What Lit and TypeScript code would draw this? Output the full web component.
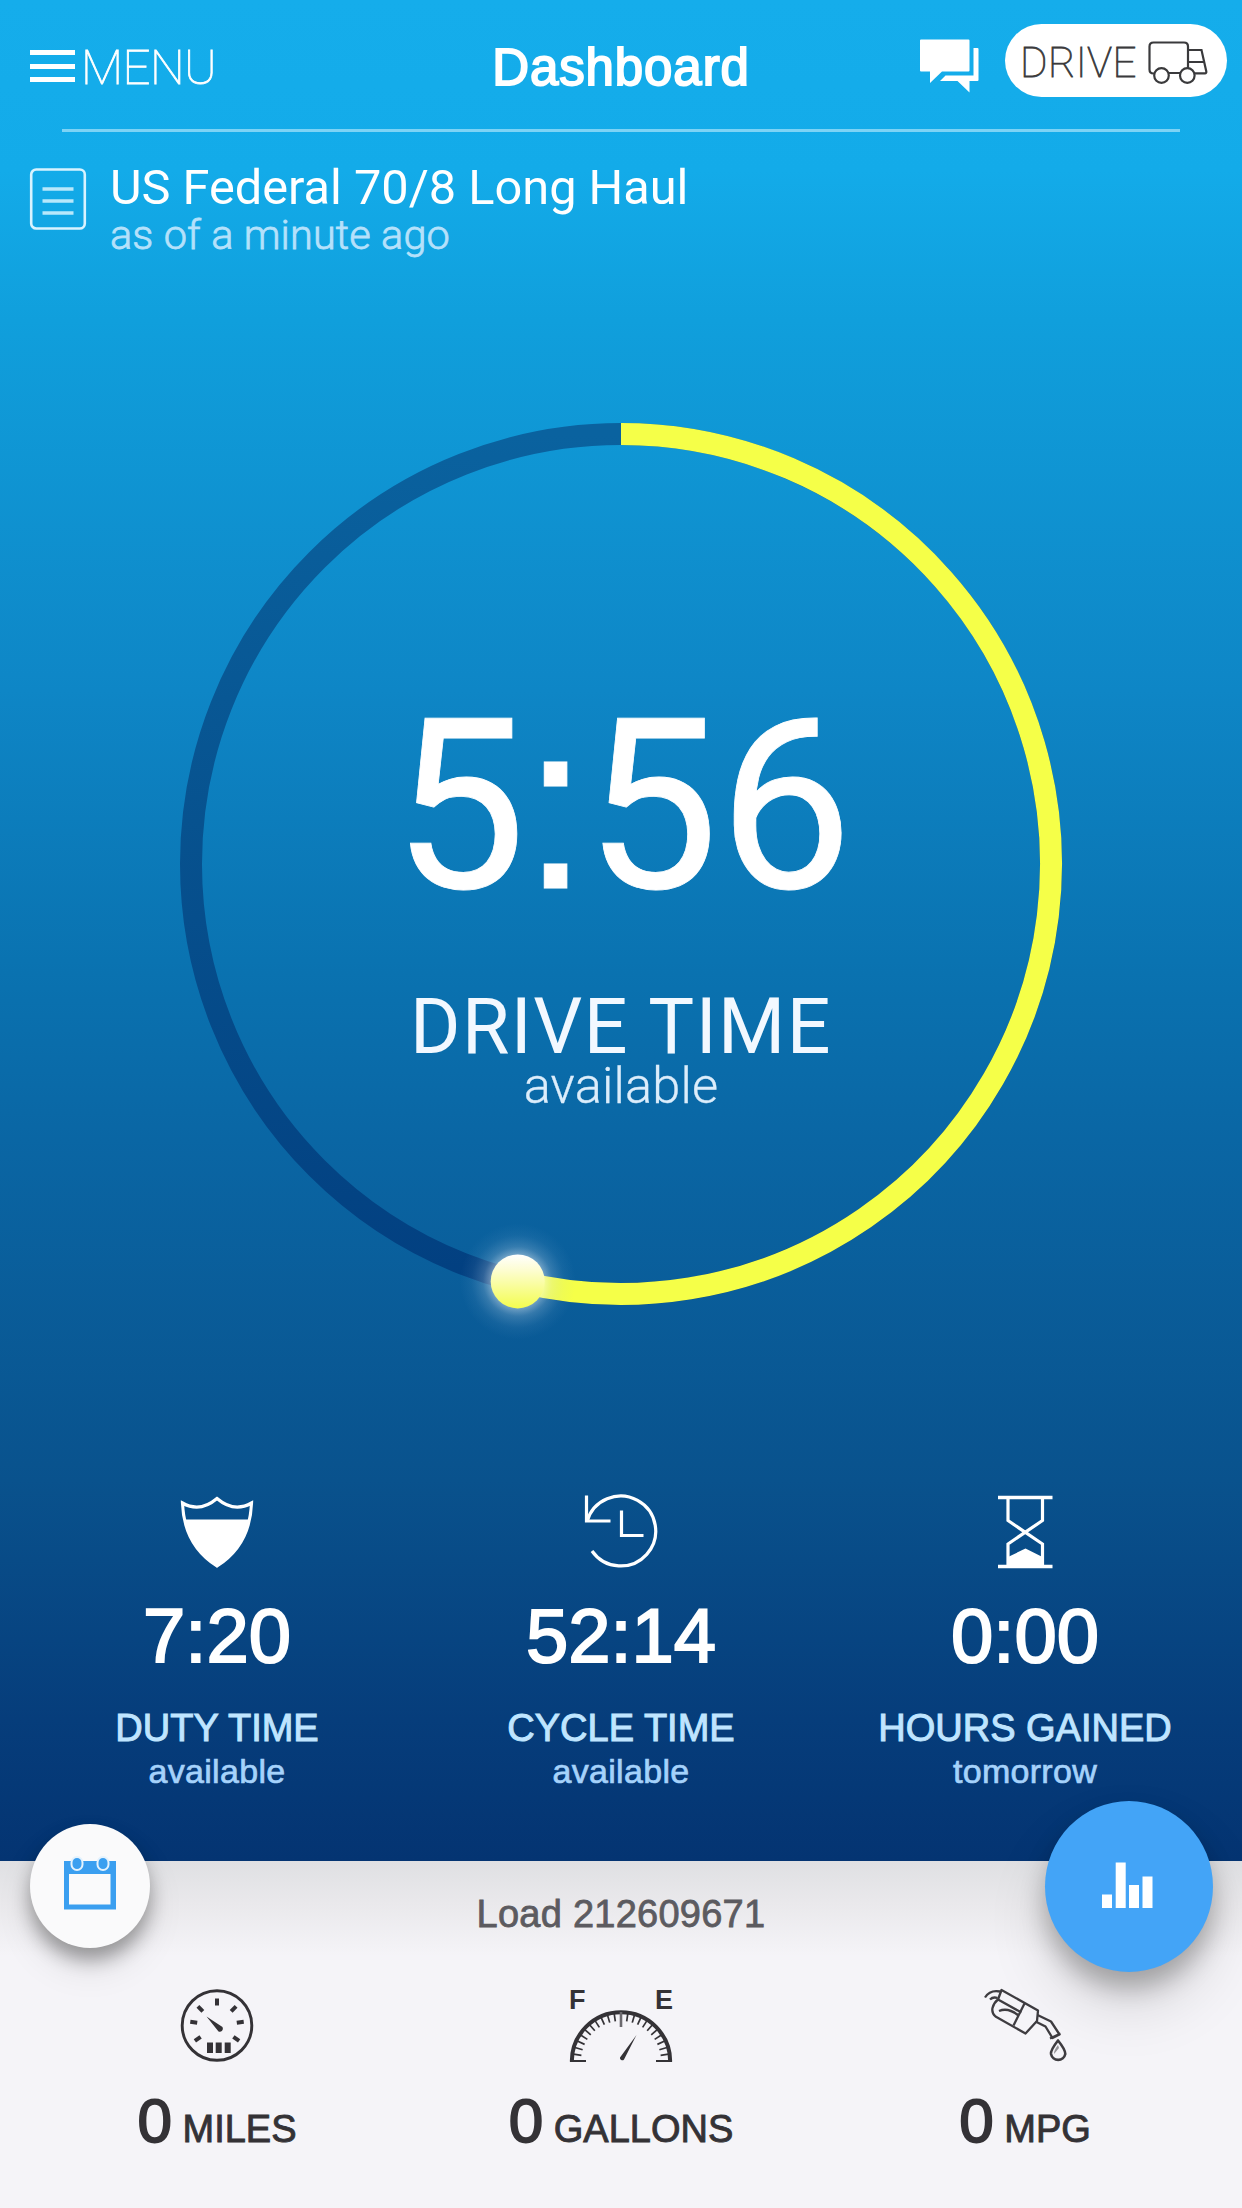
import { LitElement, html, css, svg, TemplateResult } from "lit";
import { customElement, property } from "lit/decorators.js";

const RADIUS = 430;
const CENTER = 441;

/** Point on the dial for a clockwise angle measured from twelve o'clock. */
function polar(cx: number, cy: number, r: number, deg: number): [number, number] {
  const a = (deg * Math.PI) / 180;
  return [cx + r * Math.sin(a), cy - r * Math.cos(a)];
}

@customElement("time-dial")
export class TimeDial extends LitElement {
  @property() value = "";
  @property() label = "";
  @property() caption = "";
  @property({ type: Number }) angle = 0;

  static styles = css`
    :host {
      display: grid;
      justify-items: center;
      color: #fff;
      font-family: Roboto, "Liberation Sans", sans-serif;
    }
    .ring,
    .readout {
      grid-area: 1 / 1;
    }
    .ring {
      width: 882px;
      height: 882px;
      overflow: visible;
    }
    .readout {
      display: flex;
      flex-direction: column;
      align-items: center;
      padding-top: 264px;
    }
    .value {
      height: 240px;
      padding-left: 3px;
      font-size: 238px;
      line-height: 240px;
      white-space: nowrap;
      -webkit-text-stroke: 0.800px #fff;
    }
    .colon {
      margin: 0 -3.600px;
      font-family: "Liberation Sans", sans-serif;
      line-height: 0;
    }
    .label {
      margin-top: 60px;
      font-size: 77px;
      line-height: 80px;
      letter-spacing: 1.500px;
      color: #f2f8ff;
      white-space: nowrap;
    }
    .caption {
      margin-top: -1px;
      font-size: 50.500px;
      line-height: 40px;
      font-weight: 300;
      letter-spacing: 0.200px;
      color: #dcedfb;
      -webkit-text-stroke: 0.300px #dcedfb;
    }
  `;

  render() {
    const [ex, ey] = polar(CENTER, CENTER, RADIUS, this.angle);
    const top = CENTER - RADIUS;
    const large = this.angle > 180 ? 1 : 0;
    const [hours, minutes] = this.value.split(":");
    return html`
      <svg class="ring" viewBox="0 0 882 882" fill="none">
        <defs>
          <linearGradient id="track" x1="0" y1="0" x2="0" y2="1">
            <stop offset="0" stop-color="#0a629f" />
            <stop offset="0.45" stop-color="#07528f" />
            <stop offset="1" stop-color="#023f80" />
          </linearGradient>
          <linearGradient id="knob" x1="0" y1="0" x2="0" y2="1">
            <stop offset="0" stop-color="#ffffff" />
            <stop offset="0.3" stop-color="#fdfdd0" />
            <stop offset="1" stop-color="#f3fd4e" />
          </linearGradient>
          <radialGradient id="glow">
            <stop offset="0.42" stop-color="#fff" stop-opacity="0.5" />
            <stop offset="0.6" stop-color="#cfe0f0" stop-opacity="0.22" />
            <stop offset="0.8" stop-color="#a8c8e4" stop-opacity="0.07" />
            <stop offset="1" stop-color="#8fb8dc" stop-opacity="0" />
          </radialGradient>
        </defs>
        <circle cx=${CENTER} cy=${CENTER} r=${RADIUS} stroke="url(#track)" stroke-width="22" />
        <path
          d="M${CENTER} ${top}A${RADIUS} ${RADIUS} 0 ${large} 1 ${ex} ${ey}"
          stroke="#f5ff48"
          stroke-width="22"
        />
        <circle cx=${ex} cy=${ey} r="58" fill="url(#glow)" />
        <circle cx=${ex} cy=${ey} r="27" fill="url(#knob)" />
      </svg>
      <div class="readout">
        <div class="value">${hours}<span class="colon">:</span>${minutes}</div>
        <div class="label">${this.label}</div>
        <div class="caption">${this.caption}</div>
      </div>
    `;
  }
}

const chatIcon = html`<svg class="chat" viewBox="0 0 59 54">
  <path fill="#fff" d="M0 1.5Q0 .5 1 .5H48.500Q49.500 .5 49.500 1.500V31.500Q49.500 32.500 48.500 32.500H22L10 44V32.500H1Q0 32.500 0 31.500Z" />
  <path fill="#fff" d="M53.500 9H57.500Q58.500 9 58.500 10V41Q58.500 42 57.500 42H49.500V53.500L37.500 42H20L25.500 36.500H53.500Z" />
</svg>`;

const truckIcon = html`<svg class="truck" viewBox="0 0 60 44" fill="none" stroke="#3a3a3c" stroke-width="2.200">
  <path d="M7 32.500H5.500Q1.500 32.500 1.500 28.500V5.500Q1.500 1.500 5.500 1.500H36Q40 1.500 40 5.500V27M20 32H32" />
  <path d="M40 9H53.500L58.300 30.500Q58.500 32.300 57 32.300H46.500M40 21H56" />
  <circle cx="13.500" cy="34.500" r="7.300" />
  <circle cx="39.300" cy="34.500" r="7.300" />
</svg>`;

const logIcon = html`<svg class="log" viewBox="0 0 56 62" fill="none">
  <rect x="1.200" y="1.500" width="53.600" height="59" rx="5" stroke="#d8f3ff" stroke-width="2.600" />
  <path d="M12.500 21H43.500M12.500 33H43.500M12.500 45H43.500" stroke="#b8e8fb" stroke-width="3.400" />
</svg>`;

const shieldIcon = html`<svg class="icon" viewBox="0 0 74 74">
  <path
    d="M2.500 8Q20 18 37 3.500Q54 18 71.500 8Q70 50 37 71Q4 50 2.500 8Z"
    fill="none"
    stroke="#fff"
    stroke-width="3.200"
  />
  <path d="M5 24.500H69Q63 56 37 72Q11 56 5 24.500Z" fill="#fff" />
</svg>`;

const cycleIcon = html`<svg class="icon" viewBox="0 0 74 74" fill="none" stroke="#fff" stroke-width="3.200">
  <path d="M3 26.500A35 35 0 1 1 8 56" />
  <path d="M2.500 0.500V26H26.500M37.500 15.500V40.500H59.500" />
</svg>`;

const hourglassIcon = html`<svg class="icon" viewBox="0 0 74 74" fill="none" stroke="#fff" stroke-width="3.200">
  <path d="M10 2.500H64.500M10 71.500H64.500" stroke-width="3.500" />
  <path d="M20 3V25.500L54.500 49V71M54.500 3V25.500L20 49V71" />
  <path d="M20 71V62L37.500 53.500L54.500 62V71Z" fill="#fff" stroke="none" />
</svg>`;

function odometerIcon(): TemplateResult {
  const marks = [-125, -82, -45, 0, 45, 82, 125].map((deg) => {
    const [x1, y1] = polar(37, 37.5, 20, deg);
    const [x2, y2] = polar(37, 37.5, 27, deg);
    return svg`<line x1=${x1} y1=${y1} x2=${x2} y2=${y2} />`;
  });
  return html`<svg class="icon" viewBox="0 0 74 74" fill="none" stroke="#343236">
    <circle cx="37" cy="37.500" r="34.800" stroke-width="2.900" />
    <g stroke-width="4">${marks}</g>
    <path d="M26.500 28.500L42.500 39A3.200 3.200 0 0 1 38.500 43.500Z" fill="#343236" stroke="none" />
    <path d="M30 54.500V65M38.700 54.500V65M47.700 54.500V65" stroke-width="6" />
  </svg>`;
}

function fuelIcon(): TemplateResult {
  const ticks: TemplateResult<2>[] = [];
  for (let i = 1; i < 22; i++) {
    if (i === 11) continue;
    const deg = -90 + (i * 180) / 22;
    const [x1, y1] = polar(52, 73, 40, deg);
    const [x2, y2] = polar(52, 73, 48, deg);
    ticks.push(svg`<line x1=${x1} y1=${y1} x2=${x2} y2=${y2} />`);
  }
  return html`<svg class="fuel" viewBox="0 0 104 74" fill="none" stroke="#343236">
    <text class="mark" x="0" y="21">F</text>
    <text class="mark" x="86" y="21">E</text>
    <path d="M2.800 73.500A49.200 49.200 0 0 1 101.200 73.500" stroke-width="4" />
    <g stroke-width="1.700">${ticks}</g>
    <path d="M52 24V39" stroke-width="2.600" stroke="#6b696e" />
    <path d="M1 73H17M87 73H103" stroke-width="2" />
    <path d="M67.500 47L55 71.500A2.300 2.300 0 0 1 51 69.500Z" fill="#343236" stroke="none" />
  </svg>`;
}

const nozzleIcon = html`<svg class="nozzle" viewBox="0 0 84 74" fill="none" stroke="#3e3c40" stroke-width="2.300" stroke-linejoin="round">
  <path d="M2 9.500Q7 1.500 17 3.500M7 11.500Q10 8.500 14.500 10" />
  <path d="M18.500 2L55 22.500L54 33L42.500 45.500L12.500 28.500Q8.500 25 9.500 20Q11 14.500 15 11.500Z" />
  <path d="M15 11.500L38.500 24.500M41.500 15.500L30.500 37.500M16 23Q25 19 35.500 27.500" />
  <path d="M54.500 27L68 33.500L76.500 46.500L69.500 50L62.500 38.500L52.500 33.500M67 50.500L77.500 45.500" />
  <path d="M75 52.500Q67.500 62 68 66A7.300 7.300 0 0 0 82.300 66Q82.300 61.500 75 52.500Z" stroke-width="2.600" />
  <path d="M75 57Q70.500 63 71 66L76 60Z" fill="#343236" fill-opacity="0.500" stroke="none" />
</svg>`;

const calendarIcon = html`<svg class="calendar" viewBox="0 0 54 54">
  <path fill="#3b9ff0" fill-rule="evenodd" d="M1 4H53V52.500H1ZM6 17V47.500H47.500V17Z" />
  <g fill="#3b9ff0" stroke="#e4f2fd" stroke-width="2">
    <rect x="8.500" y="0" width="11" height="13" rx="5.500" />
    <rect x="34.500" y="0" width="11" height="13" rx="5.500" />
  </g>
</svg>`;

const barsIcon = html`<svg class="bars" viewBox="0 0 51 46" fill="#fff">
  <path d="M0 32.500H10V46H0ZM13.700 0.500H23.700V46H13.700ZM27 23H37V46H27ZM40.500 14.500H50.500V46H40.500Z" />
</svg>`;

interface Stat {
  icon: TemplateResult;
  value: string;
  label: string;
  caption: string;
}

interface LoadMetric {
  icon: TemplateResult;
  value: string;
  unit: string;
}

const stats: Stat[] = [
  { icon: shieldIcon, value: "7:20", label: "DUTY TIME", caption: "available" },
  { icon: cycleIcon, value: "52:14", label: "CYCLE TIME", caption: "available" },
  { icon: hourglassIcon, value: "0:00", label: "HOURS GAINED", caption: "tomorrow" },
];

const metrics: LoadMetric[] = [
  { icon: odometerIcon(), value: "0", unit: "MILES" },
  { icon: fuelIcon(), value: "0", unit: "GALLONS" },
  { icon: nozzleIcon, value: "0", unit: "MPG" },
];

@customElement("app-root")
export class AppRoot extends LitElement {
  static styles = css`
    :host {
      display: block;
    }
    svg {
      display: block;
      flex: none;
      overflow: visible;
    }
    .page {
      display: flex;
      flex-direction: column;
      width: 1242px;
      height: 2208px;
      overflow: hidden;
      font-family: "Liberation Sans", Arial, sans-serif;
    }
    .hero {
      flex: none;
      display: flex;
      flex-direction: column;
      box-sizing: border-box;
      height: 1861px;
      background: linear-gradient(
        180deg,
        #15adeb 0,
        #13abe9 170px,
        #109fdc 320px,
        #0e86c6 690px,
        #0a73b1 960px,
        #0a66a4 1140px,
        #09528d 1480px,
        #063d7b 1720px,
        #043472 1861px
      );
    }
    .header {
      display: grid;
      grid-template-columns: 1fr auto 1fr;
      align-items: start;
      height: 129px;
      padding: 0 15px;
      color: #fff;
    }
    .menu {
      display: flex;
      align-items: center;
      gap: 6px;
      padding: 38px 0 0 15px;
      font: 100 49px/60px Roboto, sans-serif;
      letter-spacing: -0.5px;
      -webkit-text-stroke: 0.8px #fff;
    }
    .burger {
      display: flex;
      flex-direction: column;
      gap: 8.500px;
      margin-top: -4px;
      width: 45px;
    }
    .burger-line {
      height: 5px;
      background: #fff;
    }
    .title {
      padding-top: 38px;
      font-size: 51px;
      line-height: 60px;
      letter-spacing: 0.900px;
      -webkit-text-stroke: 1.900px #fff;
    }
    .actions {
      display: flex;
      justify-content: flex-end;
      gap: 26px;
      padding-top: 24px;
    }
    .chat {
      width: 59px;
      height: 54px;
      margin-top: 15px;
    }
    .drive {
      display: flex;
      align-items: center;
      box-sizing: border-box;
      width: 222px;
      height: 73px;
      padding: 5px 19px 0 15px;
      justify-content: space-between;
      border-radius: 37px;
      background: #fff;
      color: #3a3a3c;
      font: 100 42px/60px Roboto, sans-serif;
      letter-spacing: 0.400px;
      -webkit-text-stroke: 0.8px #3a3a3c;
    }
    .truck {
      width: 60px;
      height: 44px;
    }
    .rule {
      height: 3px;
      margin: 0 62px;
      background: #7dd3f5;
    }
    .ruleset {
      display: flex;
      gap: 24px;
      height: 120px;
      padding: 29px 30px 0;
      font-family: Roboto, sans-serif;
    }
    .log {
      width: 56px;
      height: 62px;
      margin-top: 7px;
    }
    .ruleset-name {
      font-size: 48.700px;
      line-height: 54px;
      color: #fff;
    }
    .ruleset-age {
      font-size: 41.500px;
      line-height: 40px;
      letter-spacing: 0.100px;
      color: #b5e1fb;
      font-weight: 300;
      -webkit-text-stroke: 0.800px #b5e1fb;
    }
    .dial {
      margin-top: 142px;
    }
    .stats,
    .metrics {
      display: grid;
      grid-template-columns: repeat(3, 1fr);
      padding: 0 15px;
    }
    .stats {
      margin-top: 190px;
    }
    .stat,
    .metric {
      display: flex;
      flex-direction: column;
      align-items: center;
      white-space: nowrap;
    }
    .icon {
      width: 74px;
      height: 74px;
    }
    .stat-value {
      margin-top: 27px;
      font-size: 76px;
      line-height: 80px;
      color: #fff;
      -webkit-text-stroke: 2px #fff;
    }
    .stat-label {
      margin-top: 30px;
      font-size: 38px;
      line-height: 44px;
      color: #bfe5ff;
      -webkit-text-stroke: 1px #bfe5ff;
    }
    .stat-caption {
      margin-top: 1px;
      font-size: 34px;
      line-height: 40px;
      letter-spacing: 0.300px;
      color: #a5d2fb;
      -webkit-text-stroke: 0.700px #a5d2fb;
    }
    .load {
      position: relative;
      flex: 1;
      display: flex;
      flex-direction: column;
      background: linear-gradient(180deg, #dfe0e3 0, #e9e8eb 40px, #f5f4f8 95px);
    }
    .load-title {
      padding-top: 31px;
      text-align: center;
      font-size: 38px;
      line-height: 44px;
      letter-spacing: 0.250px;
      color: #5c5b60;
      -webkit-text-stroke: 0.800px #5c5b60;
    }
    .metrics {
      margin-top: 52px;
    }
    .fuel {
      width: 104px;
      height: 74px;
    }
    .mark {
      font: bold 27px "Liberation Sans", sans-serif;
      fill: #343236;
      stroke: none;
    }
    .nozzle {
      width: 84px;
      height: 74px;
    }
    .metric-value {
      margin-top: 24px;
      line-height: 70px;
      font-size: 38px;
      color: #343236;
      -webkit-text-stroke: 0.900px #343236;
    }
    .metric-number {
      font-size: 62px;
      -webkit-text-stroke: 1.800px #343236;
    }
    .fab {
      position: absolute;
      display: flex;
      align-items: center;
      justify-content: center;
      border-radius: 50%;
    }
    .fab-calendar {
      left: 30px;
      top: -37px;
      width: 120px;
      height: 124px;
      background: #fafafb;
      box-shadow: 0 12px 18px rgba(0, 0, 0, 0.32), 0 20px 36px rgba(0, 0, 0, 0.1);
    }
    .fab-stats {
      left: 1044.500px;
      top: -60px;
      width: 168px;
      height: 171px;
      background: #43a4f7;
      box-shadow: 0 16px 24px rgba(0, 0, 0, 0.26), 0 34px 60px rgba(0, 0, 0, 0.13);
    }
    .calendar {
      width: 54px;
      height: 54px;
      margin-bottom: 4px;
    }
    .bars {
      width: 51px;
      height: 46px;
      margin: 0 2px 3px 0;
    }
  `;

  render() {
    return html`
      <div class="page">
        <section class="hero">
          <header class="header">
            <div class="menu">
              <span class="burger">
                <span class="burger-line"></span>
                <span class="burger-line"></span>
                <span class="burger-line"></span>
              </span>
              <span>MENU</span>
            </div>
            <div class="title">Dashboard</div>
            <div class="actions">
              ${chatIcon}
              <div class="drive"><span>DRIVE</span>${truckIcon}</div>
            </div>
          </header>
          <div class="rule"></div>
          <div class="ruleset">
            ${logIcon}
            <div>
              <div class="ruleset-name">US Federal 70/8 Long Haul</div>
              <div class="ruleset-age">as of a minute ago</div>
            </div>
          </div>
          <time-dial
            class="dial"
            value="5:56"
            label="DRIVE TIME"
            caption="available"
            angle="193.9"
          ></time-dial>
          <div class="stats">
            ${stats.map(
              (s) => html`<div class="stat">
                ${s.icon}
                <div class="stat-value">${s.value}</div>
                <div class="stat-label">${s.label}</div>
                <div class="stat-caption">${s.caption}</div>
              </div>`
            )}
          </div>
        </section>
        <section class="load">
          <div class="load-title">Load 212609671</div>
          <div class="metrics">
            ${metrics.map(
              (m) => html`<div class="metric">
                ${m.icon}
                <div class="metric-value"><span class="metric-number">${m.value}</span> ${m.unit}</div>
              </div>`
            )}
          </div>
          <div class="fab fab-calendar">${calendarIcon}</div>
          <div class="fab fab-stats">${barsIcon}</div>
        </section>
      </div>
    `;
  }
}
